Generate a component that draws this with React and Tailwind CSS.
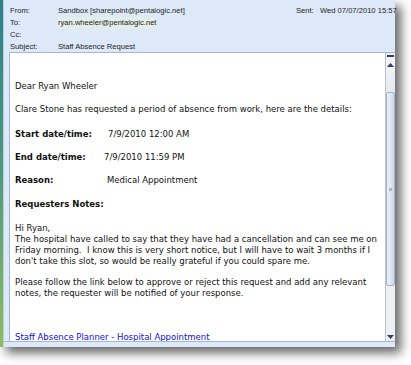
import React from "react";

const body = "font-['DejaVu_Sans',sans-serif] text-[8.5px] leading-[11px] text-[#111]";

export default function App() {
  return (
    <div className="w-[411px] h-[365px] bg-white overflow-hidden">
      <div className="w-[395px] h-[347px] flex shadow-[6px_6px_10px_rgba(0,0,0,0.6)]">
        {/* left chrome */}
        <div className="w-[3px] h-full bg-gradient-to-b from-[#2f7f86] via-[#4d9a7a] to-[#8dbd57]" />
        <div className="flex-1 flex flex-col bg-[#dde9f8] border-l border-[#b8cde3]">
          {/* header */}
          <div className="h-[52px] relative font-['Liberation_Sans',sans-serif] text-[7.6px] text-[#222] pl-[6px]">
            <div className="flex h-[12px] items-center mt-[5px]">
              <span className="w-[48px]">From:</span>
              <span>Sandbox [sharepoint@pentalogic.net]</span>
              <span className="ml-auto w-[99px] flex">
                <span className="w-[24px] shrink-0">Sent:</span>
                <span className="whitespace-nowrap">Wed 07/07/2010 15:57</span>
              </span>
            </div>
            <div className="flex h-[12px] items-center">
              <span className="w-[46px]">To:</span>
              <span className="bg-[#e3eee9] rounded-[6px] px-[2px]">ryan.wheeler@pentalogic.net</span>
            </div>
            <div className="flex h-[12px] items-center">
              <span className="w-[48px]">Cc:</span>
            </div>
            <div className="flex h-[12px] items-center">
              <span className="w-[48px]">Subject:</span>
              <span>Staff Absence Request</span>
            </div>
          </div>
          {/* body */}
          <div className="flex-1 flex ml-[5px] border-t border-l border-[#9fb8d8] bg-white overflow-hidden">
            <div className={`flex-1 pl-[5px] pt-[28px] ${body}`}>
              <p>Dear Ryan Wheeler</p>
              <p className="mt-[12px]">Clare Stone has requested a period of absence from work, here are the details:</p>
              <p className="mt-[14px] flex"><b className="w-[93px]">Start date/time:</b><span>7/9/2010 12:00 AM</span></p>
              <p className="mt-[12px] flex"><b className="w-[89px]">End date/time:</b><span>7/9/2010 11:59 PM</span></p>
              <p className="mt-[12px] flex"><b className="w-[92px]">Reason:</b><span>Medical Appointment</span></p>
              <p className="mt-[13px]"><b>Requesters Notes:</b></p>
              <p className="mt-[13px]">Hi Ryan,<br />The hospital have called to say that they have had a cancellation and can see me on<br />Friday morning.&nbsp; I know this is very short notice, but I will have to wait 3 months if I<br />don't take this slot, so would be really grateful if you could spare me.</p>
              <p className="mt-[10px]">Please follow the link below to approve or reject this request and add any relevant<br />notes, the requester will be notified of your response.</p>
              <p className="mt-[33px]"><a className="text-[#1010e0] underline" href="#">Staff Absence Planner - Hospital Appointment</a></p>
            </div>
            {/* scrollbar */}
            <div className="w-[10px] flex flex-col border-l border-[#b9c3d0] bg-[#eef0f4]">
              <div className="h-[4px] flex items-center justify-center mt-[1px]"><div className="w-[7px] h-[2px] bg-[#2c3d66]" /></div>
              <div className="h-[34px] flex items-start justify-center pt-[5px] bg-gradient-to-b from-[#f3f5f8] to-[#e6e9ee]">
                <svg width="7" height="4" viewBox="0 0 7 4"><path d="M3.5 0 L7 4 L0 4 Z" fill="#2c3d66" /></svg>
              </div>
              <div className="h-[194px] border border-[#a6b5ca] rounded-[2px] bg-gradient-to-r from-[#e8eef7] via-[#dfe7f2] to-[#cbd6e6] flex items-center justify-center">
                <div className="w-[3px] h-[3px] bg-[#aab7c8]" />
              </div>
              <div className="flex-1 flex items-end justify-center pb-[2px]">
                <svg width="7" height="4" viewBox="0 0 7 4"><path d="M0 0 L7 0 L3.5 4 Z" fill="#2c3d66" /></svg>
              </div>
            </div>
          </div>
          <div className="h-[6px] border-t border-[#9fb8d8] bg-[#dde9f8]" />
        </div>
      </div>
    </div>
  );
}
